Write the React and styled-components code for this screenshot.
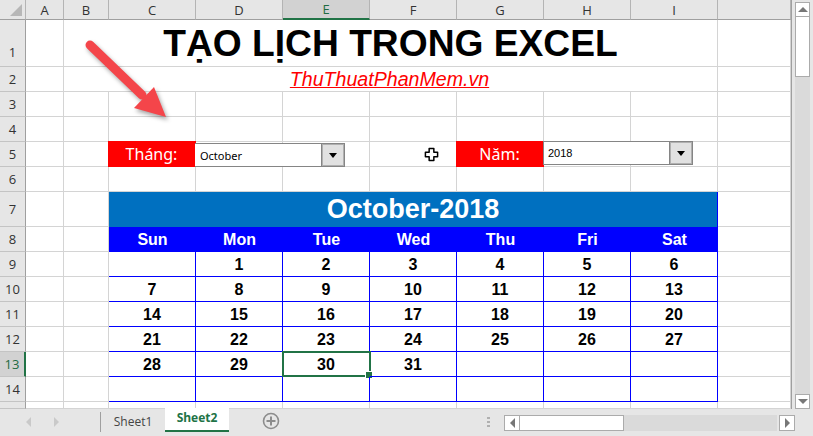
import React from "react";
import styled, { createGlobalStyle } from "styled-components";

const COLUMNS = ["A", "B", "C", "D", "E", "F", "G", "H", "I"];
const DAY_NAMES = ["Sun", "Mon", "Tue", "Wed", "Thu", "Fri", "Sat"];
const WEEKS = [
  ["", 1, 2, 3, 4, 5, 6],
  [7, 8, 9, 10, 11, 12, 13],
  [14, 15, 16, 17, 18, 19, 20],
  [21, 22, 23, 24, 25, 26, 27],
  [28, 29, 30, 31, "", "", ""],
  ["", "", "", "", "", "", ""],
];

const GlobalStyle = createGlobalStyle`
  html, body {
    margin: 0;
    padding: 0;
    background: #e6e6e6;
    overflow: hidden;
  }
  * {
    box-sizing: border-box;
  }
`;

const Window = styled.div`
  width: 813px;
  height: 436px;
  display: flex;
  flex-direction: column;
  background: #e6e6e6;
  overflow: hidden;
  position: relative;
`;

const Main = styled.div`
  display: flex;
  height: 409px;
`;

const Sheet = styled.div`
  position: relative;
  width: 792px;
  height: 409px;
  display: grid;
  grid-template-columns: 26px 38px 45px repeat(7, 87px) 73px;
  grid-template-rows: 20px 47px repeat(5, 25px) 35px repeat(7, 25px) 7px;
  background: #fff;
  border-right: 1px solid #9f9f9f;
  border-bottom: 1px solid #9f9f9f;
`;

const Corner = styled.div`
  background: #e6e6e6;
  border-right: 1px solid #b4b4b4;
  border-bottom: 1px solid #9f9f9f;
  position: relative;

  &::after {
    content: "";
    position: absolute;
    right: 3px;
    bottom: 3px;
    border-style: solid;
    border-width: 0 0 12px 12px;
    border-color: transparent transparent #b7b7b7 transparent;
  }
`;

const ColHead = styled.div`
  display: flex;
  align-items: center;
  justify-content: center;
  font: 13px "Open Sans", sans-serif;
  color: ${(p) => (p.$active ? "#1f6b43" : "#333")};
  background: ${(p) => (p.$active ? "#d2d2d2" : "#e6e6e6")};
  border-right: 1px solid #b4b4b4;
  border-bottom: ${(p) => (p.$active ? "2px solid #217346" : "1px solid #9f9f9f")};
`;

const RowHead = styled.div`
  display: flex;
  align-items: ${(p) => (p.$tall ? "flex-end" : "center")};
  justify-content: center;
  padding-bottom: ${(p) => (p.$tall ? "5px" : "0")};
  font: 13px "Open Sans", sans-serif;
  color: ${(p) => (p.$active ? "#1f6b43" : "#333")};
  background: ${(p) => (p.$active ? "#d2d2d2" : "#e6e6e6")};
  border-bottom: 1px solid #c4c4c4;
  border-right: ${(p) => (p.$active ? "2px solid #217346" : "1px solid #9f9f9f")};
`;

const Cell = styled.div`
  display: flex;
  align-items: center;
  justify-content: center;
  border-right: 1px solid #d4d4d4;
  border-bottom: 1px solid #d4d4d4;
  grid-column: ${(p) => (p.$span ? `span ${p.$span}` : "auto")};
`;

const Title = styled.h1`
  margin: 0;
  font: bold 37.2px "Liberation Sans", Arial, sans-serif;
  color: #000;
`;

const SiteLink = styled.span`
  font: italic 19.6px "Liberation Sans", Arial, sans-serif;
  color: #f00;
  text-decoration: underline;
  padding: 1px 2px 0 0;
`;

const Label = styled(Cell)`
  margin: -1px 0 0 -1px;
  background: #f00;
  color: #fff;
  font: 16px "Noto Sans", sans-serif;
  border-right-color: #f00;
  border-bottom-color: #f00;
`;

const Calendar = styled.div`
  grid-column: 4 / span 7;
  grid-row: 8 / span 8;
  margin: -1px 0 0 -1px;
  display: grid;
  grid-template-columns: repeat(7, 87px);
  grid-template-rows: 35px repeat(7, 25px);
  border-left: 1px solid #00f;
  border-top: 1px solid #00f;
  background: #fff;
`;

const MonthTitle = styled.div`
  grid-column: span 7;
  display: flex;
  align-items: center;
  justify-content: center;
  background: #0070c0;
  color: #fff;
  font: bold 27px "Liberation Sans", Arial, sans-serif;
  border-right: 1px solid #00f;
`;

const DayName = styled.div`
  display: flex;
  align-items: center;
  justify-content: center;
  padding-top: 1px;
  background: #00f;
  color: #fff;
  font: bold 16px "Liberation Sans", Arial, sans-serif;
`;

const DayCell = styled.div`
  position: relative;
  display: flex;
  align-items: center;
  justify-content: center;
  padding-top: 2px;
  color: #000;
  font: bold 16px "Liberation Sans", Arial, sans-serif;
  border-right: 1px solid #00f;
  border-bottom: 1px solid #00f;
`;

const SelectedBox = styled.div`
  position: absolute;
  top: -1px;
  left: -1px;
  width: 89px;
  height: 26px;
  border: 2px solid #217346;

  &::after {
    content: "";
    position: absolute;
    right: -4px;
    bottom: -4px;
    width: 6px;
    height: 6px;
    background: #217346;
    border: 1px solid #fff;
  }
`;

const Combo = styled.div`
  position: absolute;
  left: ${(p) => p.$left}px;
  top: ${(p) => p.$top}px;
  width: 150px;
  height: 24px;
  display: flex;
  background: #fff;
  border: 1px solid #858585;
  border-width: 1px 1px 1px ${(p) => p.$leftBorder}px;
`;

const ComboText = styled.div`
  flex: 1;
  display: flex;
  align-items: center;
  padding-left: ${(p) => p.$pad}px;
  color: #000;
  font: 11px ${(p) => p.$font};
`;

const ComboButton = styled.div`
  width: 23px;
  display: flex;
  align-items: center;
  justify-content: center;
  background: #e1e1e1;
  border-left: 1px solid #858585;
  box-shadow: inset 0 0 0 1px #b0b0b0;

  &::after {
    content: "";
    border-style: solid;
    border-width: 5px 4.5px 0 4.5px;
    border-color: #000 transparent transparent transparent;
  }
`;

const Overlay = styled.svg`
  position: absolute;
  left: ${(p) => p.$left}px;
  top: ${(p) => p.$top}px;
  overflow: visible;
`;

const VScroll = styled.div`
  width: 21px;
  display: flex;
  flex-direction: column;
  padding: 2px 3px 0 3px;
`;

const VTrack = styled.div`
  flex: 1;
  background: #dadada;
`;

const ScrollButton = styled.div`
  width: ${(p) => (p.$wide ? "16px" : "15px")};
  height: ${(p) => (p.$wide ? "16px" : "15px")};
  flex-shrink: 0;
  display: flex;
  align-items: center;
  justify-content: center;
  background: #fff;
  border: 1px solid #ababab;

  &::after {
    content: "";
    border-style: solid;
    ${(p) => p.$dir === "up" && "border-width: 0 5px 5px 5px; border-color: transparent transparent #777 transparent;"}
    ${(p) => p.$dir === "down" && "border-width: 5px 5px 0 5px; border-color: #777 transparent transparent transparent;"}
    ${(p) => p.$dir === "left" && "border-width: 5px 5px 5px 0; border-color: transparent #777 transparent transparent;"}
    ${(p) => p.$dir === "right" && "border-width: 5px 0 5px 5px; border-color: transparent transparent transparent #777;"}
  }
`;

const VThumb = styled.div`
  width: 15px;
  height: 60px;
  background: #fff;
  border: 1px solid #ababab;
  border-top: none;
`;

const TabBar = styled.div`
  flex: 1;
  display: flex;
  align-items: stretch;
  background: #e6e6e6;
`;

const NavArrows = styled.div`
  width: 101px;
  display: flex;
  align-items: center;
  gap: 23px;
  padding-left: 26px;
  margin: 3px 0 4px;
  border-right: 1px solid #9f9f9f;
`;

const NavArrow = styled.div`
  border-style: solid;
  border-width: 5px 5px 5px 0;
  border-color: transparent #c9c9c9 transparent transparent;
  ${(p) => p.$right && "border-width: 5px 0 5px 5px; border-color: transparent transparent transparent #c9c9c9;"}
`;

const Tab = styled.div`
  position: relative;
  width: 64px;
  display: flex;
  align-items: center;
  justify-content: center;
  margin-top: ${(p) => (p.$active ? "-1px" : "0")};
  padding-bottom: 3px;
  font: ${(p) => (p.$active ? "bold" : "normal")} 12px "Open Sans", sans-serif;
  color: ${(p) => (p.$active ? "#217346" : "#444")};
  background: ${(p) => (p.$active ? "#fff" : "transparent")};
  border-bottom: ${(p) => (p.$active ? "2px solid #217346" : "none")};
  height: ${(p) => (p.$active ? "24px" : "auto")};
`;

const AddSheet = styled.svg`
  margin: 3px 0 0 33px;
  flex-shrink: 0;
`;

const Splitter = styled.div`
  width: 3px;
  height: 11px;
  margin: 8px 0 0 207px;
  background: repeating-linear-gradient(#b0b0b0 0 2px, transparent 2px 4px);
`;

const HScroll = styled.div`
  display: flex;
  margin: 6px 0 0 14px;
  height: 16px;
`;

const HThumb = styled.div`
  width: 104px;
  background: #fff;
  border: 1px solid #ababab;
  border-left: none;
`;

const HTrack = styled.div`
  width: 153px;
  margin-right: 2px;
  background: #dadada;
`;

const ArrowDrawing = () => (
  <Overlay $left={80} $top={35} width="95" height="95" viewBox="0 0 95 95" style={{ filter: "drop-shadow(2px 3px 2px rgba(0,0,0,0.35))" }}>
    <path d="M10 10 L62 60" stroke="#f4454a" strokeWidth="9" strokeLinecap="round" />
    <path d="M86 82 L74 52 L54 73 Z" fill="#f4454a" />
  </Overlay>
);

const CrossCursor = () => (
  <Overlay $left={424} $top={147} width="15" height="15" viewBox="0 0 16 16">
    <path
      d="M5.5 1.5 H10.5 V5.5 H14.5 V10.5 H10.5 V14.5 H5.5 V10.5 H1.5 V5.5 H5.5 Z"
      fill="#fff"
      stroke="#000"
      strokeWidth="1.6"
      strokeLinejoin="round"
    />
  </Overlay>
);

const rowLabel = (n) => (
  <RowHead key={`h${n}`} $tall={n === 1} $active={n === 13}>
    {n}
  </RowHead>
);

const blankCells = (row, count) =>
  Array.from({ length: count }, (_, i) => <Cell key={`${row}-${i}`} />);

export default function App() {
  const rows = [];

  // title rows are merged B:I
  rows.push(rowLabel(1), <Cell key="a1" />);
  rows.push(
    <Cell key="title" $span={8}>
      <Title>TẠO LỊCH TRONG EXCEL</Title>
    </Cell>,
    <Cell key="j1" />
  );
  rows.push(rowLabel(2), <Cell key="a2" />);
  rows.push(
    <Cell key="link" $span={8}>
      <SiteLink>ThuThuatPhanMem.vn</SiteLink>
    </Cell>,
    <Cell key="j2" />
  );

  [3, 4].forEach((n) => rows.push(rowLabel(n), ...blankCells(n, 10)));

  rows.push(
    rowLabel(5),
    ...blankCells("5a", 2),
    <Label key="thang">Tháng:</Label>,
    ...blankCells("5b", 3),
    <Label key="nam">Năm:</Label>,
    ...blankCells("5c", 3)
  );

  rows.push(rowLabel(6), ...blankCells(6, 10));

  // calendar occupies C:I of rows 7-14, only the outer cells flow here
  for (let n = 7; n <= 14; n++) {
    rows.push(rowLabel(n), ...blankCells(n, 3));
  }

  rows.push(<RowHead key="h15" />, ...blankCells(15, 10));

  return (
    <>
      <GlobalStyle />
      <Window>
        <Main>
          <Sheet>
            <Corner />
            {COLUMNS.map((c) => (
              <ColHead key={c} $active={c === "E"}>
                {c}
              </ColHead>
            ))}
            <ColHead />
            <Calendar>
              <MonthTitle>October-2018</MonthTitle>
              {DAY_NAMES.map((d) => (
                <DayName key={d}>{d}</DayName>
              ))}
              {WEEKS.flat().map((day, i) => (
                <DayCell key={i}>
                  {day}
                  {day === 30 && <SelectedBox />}
                </DayCell>
              ))}
            </Calendar>
            {rows}
            <ArrowDrawing />
            <CrossCursor />
            <Combo $left={195} $top={143} $leftBorder={0}>
              <ComboText $pad={5} $font={'"Noto Sans", sans-serif'}>October</ComboText>
              <ComboButton />
            </Combo>
            <Combo $left={543} $top={141} $leftBorder={1}>
              <ComboText $pad={4} $font={'"Liberation Sans", sans-serif'}>2018</ComboText>
              <ComboButton />
            </Combo>
          </Sheet>
          <VScroll>
            <ScrollButton $dir="up" />
            <VThumb />
            <VTrack />
            <ScrollButton $dir="down" />
          </VScroll>
        </Main>
        <TabBar>
          <NavArrows>
            <NavArrow />
            <NavArrow $right />
          </NavArrows>
          <Tab>Sheet1</Tab>
          <Tab $active>Sheet2</Tab>
          <AddSheet width="18" height="18" viewBox="0 0 18 18">
            <circle cx="9" cy="9" r="7.5" fill="none" stroke="#8c8c8c" strokeWidth="1.6" />
            <path d="M9 4.5 V13.5 M4.5 9 H13.5" stroke="#8c8c8c" strokeWidth="2" />
          </AddSheet>
          <Splitter />
          <HScroll>
            <ScrollButton $dir="left" $wide />
            <HThumb />
            <HTrack />
            <ScrollButton $dir="right" $wide />
          </HScroll>
        </TabBar>
      </Window>
    </>
  );
}
